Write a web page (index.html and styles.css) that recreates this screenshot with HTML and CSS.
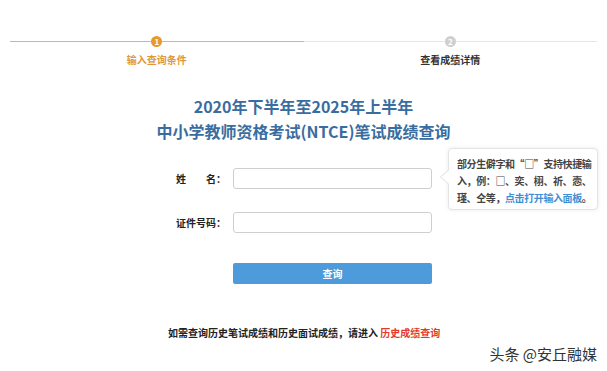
FILE: index.html
```html
<!DOCTYPE html>
<html lang="zh-CN">
<head>
<meta charset="utf-8">
<title>成绩查询</title>
<link rel="stylesheet" href="styles.css">
</head>
<body>
<div class="page">
  <div class="steps">
    <div class="step active">
      <div class="track"><span class="seg"></span><span class="dot">1</span><span class="seg"></span></div>
      <div class="step-label">输入查询条件</div>
    </div>
    <div class="step">
      <div class="track"><span class="seg"></span><span class="dot">2</span><span class="seg"></span></div>
      <div class="step-label">查看成绩详情</div>
    </div>
  </div>

  <h1 class="title">
    <span class="title-line">2020年下半年至2025年上半年</span>
    <span class="title-line">中小学教师资格考试(NTCE)笔试成绩查询</span>
  </h1>

  <form class="form">
    <div class="row">
      <label class="label">姓<span class="gap"></span>名：</label>
      <input class="input" type="text">
    </div>
    <div class="row">
      <label class="label">证件号码：</label>
      <input class="input" type="text">
    </div>
    <div class="row btn-row">
      <span class="label"></span>
      <button class="btn" type="button">查询</button>
    </div>
    <div class="tip">
      <span class="tip-line">部分生僻字和“□”支持快捷输</span>
      <span class="tip-line">入，例：□、奕、栩、祈、悫、</span>
      <span class="tip-line">瑾、仝等，<a class="tip-link">点击打开输入面板</a>。</span>
    </div>
  </form>

  <p class="history">如需查询历史笔试成绩和历史面试成绩，请进入 <a class="history-link">历史成绩查询</a></p>

  <div class="watermark">头条 @安丘融媒</div>
</div>
</body>
</html>
```

FILE: styles.css
```css
* { box-sizing: border-box; }
html, body { margin: 0; padding: 0; background: #fff; }
body {
  font-family: "Noto Sans CJK SC", "Noto Sans", sans-serif;
  color: #333;
  width: 607px;
  height: 371px;
  overflow: hidden;
}
.page {
  display: flex;
  flex-direction: column;
  padding-top: 36px;
  height: 371px;
}
.steps {
  display: flex;
  padding: 0 10px;
}
.step { flex: 1; display: flex; flex-direction: column; align-items: center; }
.track { display: flex; align-items: center; width: 100%; height: 11px; }
.seg { flex: 1; height: 1px; background: #e6e6e6; }
.dot {
  width: 11px; height: 11px; border-radius: 50%;
  background: #cfcfcf; color: #fff;
  font-size: 8px; line-height: 11px; text-align: center; font-weight: 700;
}
.step.active .seg { background: #e2b56e; }
.step.active .dot { background: #e49a2e; }
.step-label {
  margin-top: 6px;
  font-size: 10px; line-height: 14px; font-weight: 700; color: #333;
}
.step.active .step-label { color: #e0973a; }

.title {
  margin: 27px 0 0;
  display: flex; flex-direction: column; align-items: center;
  font-size: 16px; line-height: 25px; font-weight: 700; color: #3a6d9f;
}
.form {
  position: relative;
  margin: 24px 0 0 176px;
  width: 256px;
  display: flex; flex-direction: column;
}
.row { display: flex; align-items: center; height: 21px; margin-bottom: 23px; }
.row:nth-child(2) { margin-bottom: 30px; }
.label {
  width: 57px; font-size: 10px; font-weight: 700; color: #222;
  display: flex;
}
.gap { width: 20px; }
.input {
  width: 199px; height: 21px;
  border: 1px solid #cfcfcf; border-radius: 3px; background: #fff;
}
.btn {
  width: 199px; height: 21px; border: 0; border-radius: 2px;
  background: #4d9bdb; color: #fff;
  font-family: inherit; font-size: 10px; font-weight: 700;
}
.tip {
  position: absolute; left: 272px; top: -20px;
  width: 150px; height: 62px;
  padding: 6px 4px 0 8px;
  border: 1px solid #e4e4e4; border-radius: 4px; background: #fff;
  box-shadow: 0 0 4px rgba(0,0,0,0.08);
  display: flex; flex-direction: column;
  font-size: 10px; line-height: 17px; color: #444; font-weight: 700;
  letter-spacing: -0.4px;
}
.tip-line { white-space: nowrap; }
.tip::before, .tip::after {
  content: ""; position: absolute; top: 20px;
  border-style: solid; border-color: transparent;
}
.tip::before { left: -9px; border-width: 8px 9px 8px 0; border-right-color: #dcdcdc; }
.tip::after { left: -8px; top: 21px; border-width: 7px 8px 7px 0; border-right-color: #fff; }
.tip-link { color: #3d8fd6; }
.history {
  margin: 19px 0 0 168px;
  font-size: 10px; line-height: 14px; font-weight: 700; color: #222;
}
.history-link { color: #e23a2c; }
.watermark {
  margin: 5px 10px 0 auto;
  font-size: 15px; line-height: 18px; color: #333;
}
```
